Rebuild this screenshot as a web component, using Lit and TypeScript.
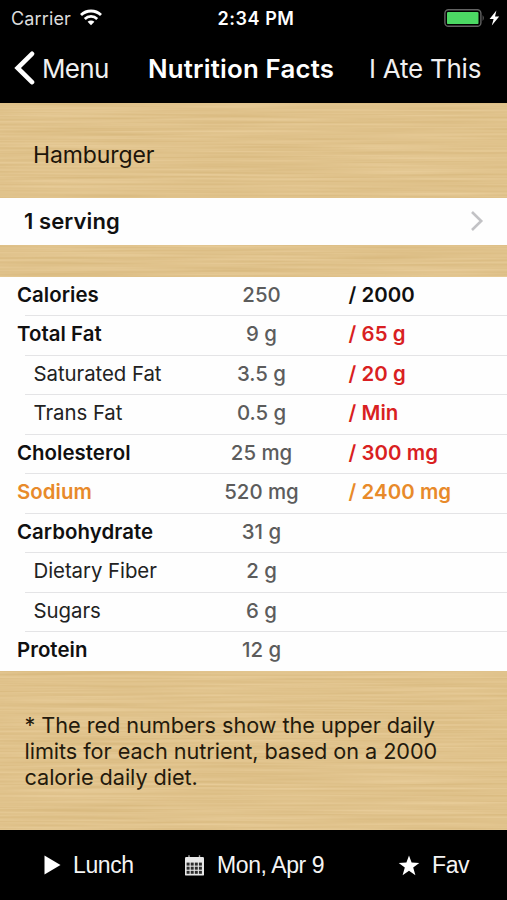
import { LitElement, html, css, svg } from "lit";
import { customElement } from "lit/decorators.js";
import { classMap } from "lit/directives/class-map.js";

interface Nutrient {
  name: string;
  amount: string;
  limit?: string;
  tone?: "red" | "orange" | "black";
  sub?: boolean;
}

const NUTRIENTS: Nutrient[] = [
  { name: "Calories", amount: "250", limit: "/ 2000", tone: "black" },
  { name: "Total Fat", amount: "9 g", limit: "/ 65 g", tone: "red" },
  { name: "Saturated Fat", amount: "3.5 g", limit: "/ 20 g", tone: "red", sub: true },
  { name: "Trans Fat", amount: "0.5 g", limit: "/ Min", tone: "red", sub: true },
  { name: "Cholesterol", amount: "25 mg", limit: "/ 300 mg", tone: "red" },
  { name: "Sodium", amount: "520 mg", limit: "/ 2400 mg", tone: "orange" },
  { name: "Carbohydrate", amount: "31 g" },
  { name: "Dietary Fiber", amount: "2 g", sub: true },
  { name: "Sugars", amount: "6 g", sub: true },
  { name: "Protein", amount: "12 g" },
];

@customElement("status-bar")
export class StatusBar extends LitElement {
  static styles = css`
    :host {
      display: grid;
      grid-template-columns: 1fr auto 1fr;
      align-items: center;
      height: 36px;
      padding: 0 7px 0 11px;
      color: #fff;
    }
    .left, .right { display: flex; align-items: center; }
    .left { gap: 9px; }
    .right { justify-content: flex-end; gap: 4px; }
    .carrier { font-size: 18px; letter-spacing: 0.15px; color: #dcdcdc; }
    .time { font-size: 18px; font-weight: 600; letter-spacing: 0.55px; padding-left: 1px; }
    svg { display: block; }
    .wifi { margin-top: -2px; }
  `;
  render() {
    return html`
      <div class="left">
        <span class="carrier">Carrier</span>
        <svg class="wifi" width="22" height="17" viewBox="0 0 22 17" fill="none" stroke="#fff" stroke-width="2.8">
          <path d="M1 6.1 A14.3 14.3 0 0 1 21 6.1" />
          <path d="M4.8 9.9 A9 9 0 0 1 17.2 9.9" />
          <path d="M11 16.2 L7.6 12.8 A4.9 4.9 0 0 1 14.4 12.8 Z" fill="#fff" stroke="none" />
        </svg>
      </div>
      <span class="time">2:34 PM</span>
      <div class="right">
        <svg width="41" height="19" viewBox="0 0 41 19">
          <rect x="0.9" y="0.7" width="36" height="16.6" rx="3.6" fill="none" stroke="#626262" stroke-width="1.4" />
          <rect x="3" y="2.9" width="31.5" height="12.2" rx="1.2" fill="#4cd964" />
          <path d="M38.6 6 Q41 9 38.6 12 Z" fill="#626262" />
        </svg>
        <svg width="11" height="16" viewBox="0 0 11 16">
          <path d="M7.4 0.5 L0.6 9 H4.6 L2.8 15.5 L10.2 6.6 H6 Z" fill="#fff" />
        </svg>
      </div>
    `;
  }
}

@customElement("nav-bar")
export class NavBar extends LitElement {
  static styles = css`
    :host {
      display: grid;
      grid-template-columns: 148px 1fr 138px;
      align-items: center;
      height: 64px;
      color: #fff;
      white-space: nowrap;
    }
    .back { display: flex; align-items: center; gap: 7px; padding-left: 14px; }
    .label { font-size: 26px; color: #f0f0f0; letter-spacing: -0.25px; }
    .back .label { letter-spacing: -0.7px; }
    .title { font-size: 25.8px; font-weight: 600; letter-spacing: 0.2px; }
    svg { display: block; }
  `;
  render() {
    return html`
      <div class="back">
        <svg width="21" height="34" viewBox="0 0 21 34" fill="none" stroke="#fff" stroke-width="4.6">
          <path d="M18 2.8 L3.6 17 L18 31.2" stroke-linecap="round" />
        </svg>
        <span class="label">Menu</span>
      </div>
      <span class="title">Nutrition Facts</span>
      <span class="label">I Ate This</span>
    `;
  }
}

@customElement("nutrient-table")
export class NutrientTable extends LitElement {
  static styles = css`
    :host { display: block; height: 394px; background: #fefefe; overflow: hidden; }
    .row {
      display: grid;
      grid-template-columns: 180px 163px 1fr;
      align-items: center;
      height: 39.5px;
      box-sizing: border-box;
      padding: 0 0 4px 17px;
      font-size: 20.4px;
      font-weight: 600;
      color: #101010;
      background: linear-gradient(#e4e4e6, #e4e4e6) 25px 100% / 100% 1px no-repeat;
    }
    .row:first-child { height: 39px; padding-bottom: 5px; }
    .row:last-child { background: none; }
    .name { letter-spacing: 0.05px; }
    .sub .name { font-weight: 400; padding-left: 16.5px; color: #222; letter-spacing: -0.05px; }
    .amount { text-align: center; font-weight: 500; color: #5c5c5c; padding-right: 34px; }
    .limit { margin-left: -11.5px; letter-spacing: 0.08px; }
    .red .limit { color: #d91f22; }
    .orange .limit, .orange .name { color: #e88a2a; }
  `;
  render() {
    return html`${NUTRIENTS.map(
      (n) => html`
        <div class=${classMap({ row: true, sub: !!n.sub, red: n.tone === "red", orange: n.tone === "orange" })}>
          <span class="name">${n.name}</span>
          <span class="amount">${n.amount}</span>
          <span class="limit">${n.limit ?? ""}</span>
        </div>
      `
    )}`;
  }
}

@customElement("tool-bar")
export class ToolBar extends LitElement {
  static styles = css`
    :host {
      display: grid;
      grid-template-columns: 184px 214px 1fr;
      height: 70px;
      align-items: center;
      background: #000;
      color: #f4f4f4;
      font: 23px/1 "Liberation Sans", Arial, sans-serif;
      letter-spacing: -0.4px;
    }
    .item { display: flex; align-items: center; gap: 12px; white-space: nowrap; }
    .item:first-child { padding-left: 44px; }
    svg { display: block; }
  `;
  render() {
    const cells = [0, 1, 2, 3].flatMap((c) =>
      [0, 1, 2].map((r) => svg`<rect x=${2.6 + c * 4.1} y=${7.6 + r * 4.1} width="3" height="3" fill="#2c2c2c" />`)
    );
    return html`
      <div class="item">
        <svg width="17" height="20" viewBox="0 0 17 20"><path d="M0.5 0.5 L16.5 10 L0.5 19.5 Z" fill="#fff" /></svg>
        <span>Lunch</span>
      </div>
      <div class="item">
        <svg width="21" height="21" viewBox="0 0 21 21">
          <path d="M5 0.3 V3 M15.5 0.3 V3" stroke="#aaa" stroke-width="1.4" />
          <rect x="1" y="2" width="19" height="18.6" rx="1.2" fill="#e8e8e8" />
          ${cells}
        </svg>
        <span>Mon, Apr 9</span>
      </div>
      <div class="item">
        <svg width="22" height="21" viewBox="0 0 22 21">
          <path d="M11 0.4 L13.6 7.6 L21.3 7.9 L15.2 12.6 L17.4 20.2 L11 15.7 L4.6 20.2 L6.8 12.6 L0.7 7.9 L8.4 7.6 Z" fill="#fff" />
        </svg>
        <span>Fav</span>
      </div>
    `;
  }
}

@customElement("app-root")
export class AppRoot extends LitElement {
  static styles = css`
    :host {
      display: flex;
      flex-direction: column;
      position: relative;
      isolation: isolate;
      width: 507px;
      height: 900px;
      overflow: hidden;
      background: #dfc28a;
      font-family: Inter, "Liberation Sans", sans-serif;
    }
    .wood { position: absolute; inset: 0; z-index: -1; }
    .top { background: #000; height: 102.5px; flex: none; }
    .food {
      height: 95px;
      box-sizing: border-box;
      padding: 9px 0 0 33px;
      display: flex;
      align-items: center;
      font-size: 23px;
      letter-spacing: -0.1px;
      color: #1d150a;
    }
    .serving {
      height: 47px;
      display: flex;
      align-items: center;
      justify-content: space-between;
      padding: 0 23px 0 24px;
      background: #fefefe;
      font-size: 22px;
      font-weight: 600;
      letter-spacing: 0.1px;
      color: #111;
    }
    .gap { height: 32.5px; }
    .note {
      flex: 1;
      margin: 0;
      padding: 40.5px 0 0 24.5px;
      font-size: 21.7px;
      letter-spacing: -0.06px;
      line-height: 26.3px;
      color: #241a0c;
      white-space: nowrap;
    }
  `;
  render() {
    return html`
      <svg class="wood" width="507" height="900">
        <filter id="grain" x="0" y="0" width="100%" height="100%" color-interpolation-filters="sRGB">
          <feTurbulence type="fractalNoise" baseFrequency="0.006 0.42" numOctaves="2" seed="8" />
          <feColorMatrix
            values="0.08 0 0 0 0.838  0.1 0 0 0 0.712  0.14 0 0 0 0.477  0 0 0 0 1"
          />
        </filter>
        <rect width="507" height="900" filter="url(#grain)" />
      </svg>
      <div class="top">
        <status-bar></status-bar>
        <nav-bar></nav-bar>
      </div>
      <div class="food">Hamburger</div>
      <div class="serving">
        <span>1 serving</span>
        <svg width="14" height="22" viewBox="0 0 14 22" fill="none" stroke="#c2c2c5" stroke-width="2.6">
          <path d="M2 2 L11.2 11 L2 20" />
        </svg>
      </div>
      <div class="gap"></div>
      <nutrient-table></nutrient-table>
      <p class="note">* The red numbers show the upper daily<br />limits for each nutrient, based on a 2000<br />calorie daily diet.</p>
      <tool-bar></tool-bar>
    `;
  }
}
